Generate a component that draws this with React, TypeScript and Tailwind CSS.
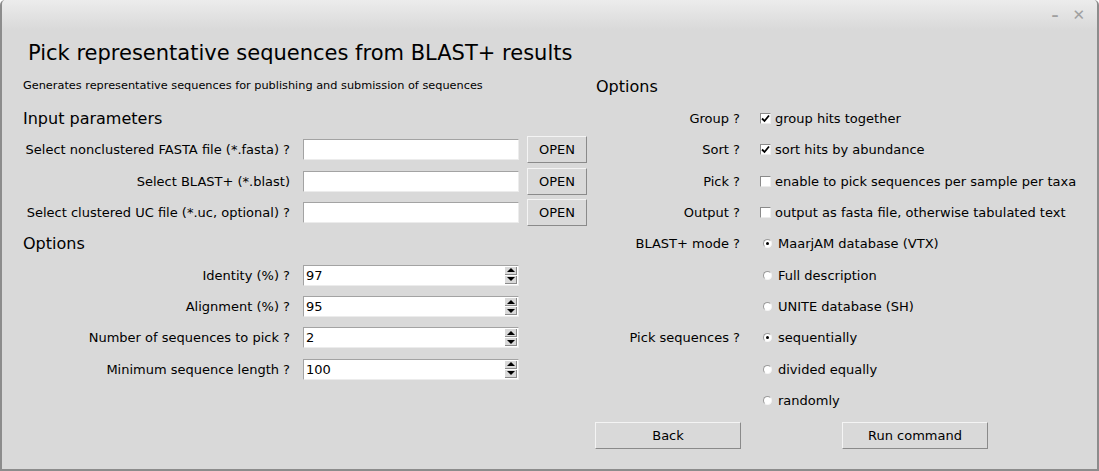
import React from 'react'

const font = { fontFamily: '"DejaVu Sans", "Liberation Sans", sans-serif' }

function Entry({ value = '' }: { value?: string }) {
  return (
    <div className="shrink-0 w-[216px] h-[21px] bg-white border border-t-[#a3a3a3] border-l-[#a3a3a3] border-b-[#ececec] border-r-[#ececec] flex items-center px-[2px] text-[13px]">
      {value}
    </div>
  )
}

function OpenButton() {
  return (
    <div className="shrink-0 ml-[8px] w-[60px] h-[27px] flex items-center justify-center text-[13px] border border-t-[#f4f4f4] border-l-[#f4f4f4] border-b-[#8a8a8a] border-r-[#8a8a8a] bg-[#d9d9d9]">
      OPEN
    </div>
  )
}

function Spin({ value }: { value: string }) {
  return (
    <div className="shrink-0 w-[216px] h-[21px] bg-white border border-t-[#a3a3a3] border-l-[#a3a3a3] border-b-[#ececec] border-r-[#ececec] flex items-center text-[13px]">
      <span className="flex-1 px-[2px]">{value}</span>
      <div className="flex flex-col gap-[1px] mr-[1px]">
        <div className="w-[12px] h-[8px] bg-[#d9d9d9] border-b border-r border-[#8a8a8a] flex items-center justify-center">
          <svg width="8" height="4" viewBox="0 0 8 4"><polygon points="4,0 8,4 0,4" fill="#000" /></svg>
        </div>
        <div className="w-[12px] h-[8px] bg-[#d9d9d9] border-b border-r border-[#8a8a8a] flex items-center justify-center">
          <svg width="8" height="4" viewBox="0 0 8 4"><polygon points="0,0 8,0 4,4" fill="#000" /></svg>
        </div>
      </div>
    </div>
  )
}

function Check({ checked, label }: { checked?: boolean; label: string }) {
  return (
    <div className="flex items-center">
      <div className="ml-[20px] w-[11px] h-[11px] bg-white border border-t-[#8a8a8a] border-l-[#8a8a8a] border-b-[#ececec] border-r-[#ececec] flex items-center justify-center">
        {checked && (
          <svg width="9" height="9" viewBox="0 0 9 9">
            <path d="M1 4.5 L3.5 7 L8 1.5" stroke="#000" strokeWidth="1.8" fill="none" />
          </svg>
        )}
      </div>
      <span className="ml-[4px] whitespace-nowrap">{label}</span>
    </div>
  )
}

function Radio({ checked, label }: { checked?: boolean; label: string }) {
  return (
    <div className="flex items-center">
      <div className="ml-[23px] w-[9px] h-[9px] rounded-full bg-white border border-t-[#9a9a9a] border-l-[#9a9a9a] border-b-[#f4f4f4] border-r-[#f4f4f4] flex items-center justify-center">
        {checked && <div className="w-[3px] h-[3px] rounded-full bg-black" />}
      </div>
      <span className="ml-[6px] whitespace-nowrap">{label}</span>
    </div>
  )
}

export default function App() {
  const row = 'h-[31.33px] flex items-center'
  return (
    <div className="w-[1099px] h-[471px] bg-[#d9d9d9] text-black rounded-t-[5px] border-x-2 border-b-2 border-[#8c8c8c] overflow-hidden" style={font}>
      {/* window title bar */}
      <div className="h-[30px] bg-gradient-to-b from-[#ececec] to-[#d9d9d9] flex items-center justify-end pr-[12px] gap-[14px] text-[#a0a0a0]">
        <span className="text-[14px] font-bold">–</span>
        <span className="text-[15px] font-bold">✕</span>
      </div>

      <div className="pl-[26px] mt-[9px] h-[30px] flex items-center text-[21px]">
        Pick representative sequences from BLAST+ results
      </div>

      <div className="flex mt-[1px]">
        {/* left column */}
        <div className="w-[593px] pl-[21px]">
          <div className="h-[33px] flex items-center text-[11.3px]">
            Generates representative sequences for publishing and submission of sequences
          </div>
          <div className={`${row} text-[16px]`}>Input parameters</div>
          {[
            'Select nonclustered FASTA file (*.fasta) ?',
            'Select BLAST+ (*.blast)',
            'Select clustered UC file (*.uc, optional) ?',
          ].map((l) => (
            <div key={l} className={`${row} text-[13px]`}>
              <span className="shrink-0 w-[267px] mr-[13px] text-right whitespace-nowrap">{l}</span>
              <Entry />
              <OpenButton />
            </div>
          ))}
          <div className={`${row} text-[16px]`}>Options</div>
          {[
            ['Identity (%) ?', '97'],
            ['Alignment (%) ?', '95'],
            ['Number of sequences to pick ?', '2'],
            ['Minimum sequence length ?', '100'],
          ].map(([l, v]) => (
            <div key={l} className={`${row} text-[13px]`}>
              <span className="shrink-0 w-[267px] mr-[13px] text-right whitespace-nowrap">{l}</span>
              <Spin value={v} />
            </div>
          ))}
        </div>

        {/* right column */}
        <div className="flex-1 text-[13px]">
          <div className="h-[33px] flex items-center pl-[1px] text-[16px]">Options</div>
          {[
            ['Group ?', <Check checked label="group hits together" />],
            ['Sort ?', <Check checked label="sort hits by abundance" />],
            ['Pick ?', <Check label="enable to pick sequences per sample per taxa" />],
            ['Output ?', <Check label="output as fasta file, otherwise tabulated text" />],
            ['BLAST+ mode ?', <Radio checked label="MaarjAM database (VTX)" />],
            ['', <Radio label="Full description" />],
            ['', <Radio label="UNITE database (SH)" />],
            ['Pick sequences ?', <Radio checked label="sequentially" />],
            ['', <Radio label="divided equally" />],
            ['', <Radio label="randomly" />],
          ].map(([l, c], i) => (
            <div key={i} className={row}>
              <span className="shrink-0 w-[145px] text-right">{l}</span>
              {c}
            </div>
          ))}
          <div className="mt-[6px] flex gap-[101px]">
            {['Back', 'Run command'].map((b) => (
              <div key={b} className="w-[146px] h-[27px] flex items-center justify-center border border-t-[#f4f4f4] border-l-[#f4f4f4] border-b-[#8a8a8a] border-r-[#8a8a8a]">
                {b}
              </div>
            ))}
          </div>
        </div>
      </div>
    </div>
  )
}
